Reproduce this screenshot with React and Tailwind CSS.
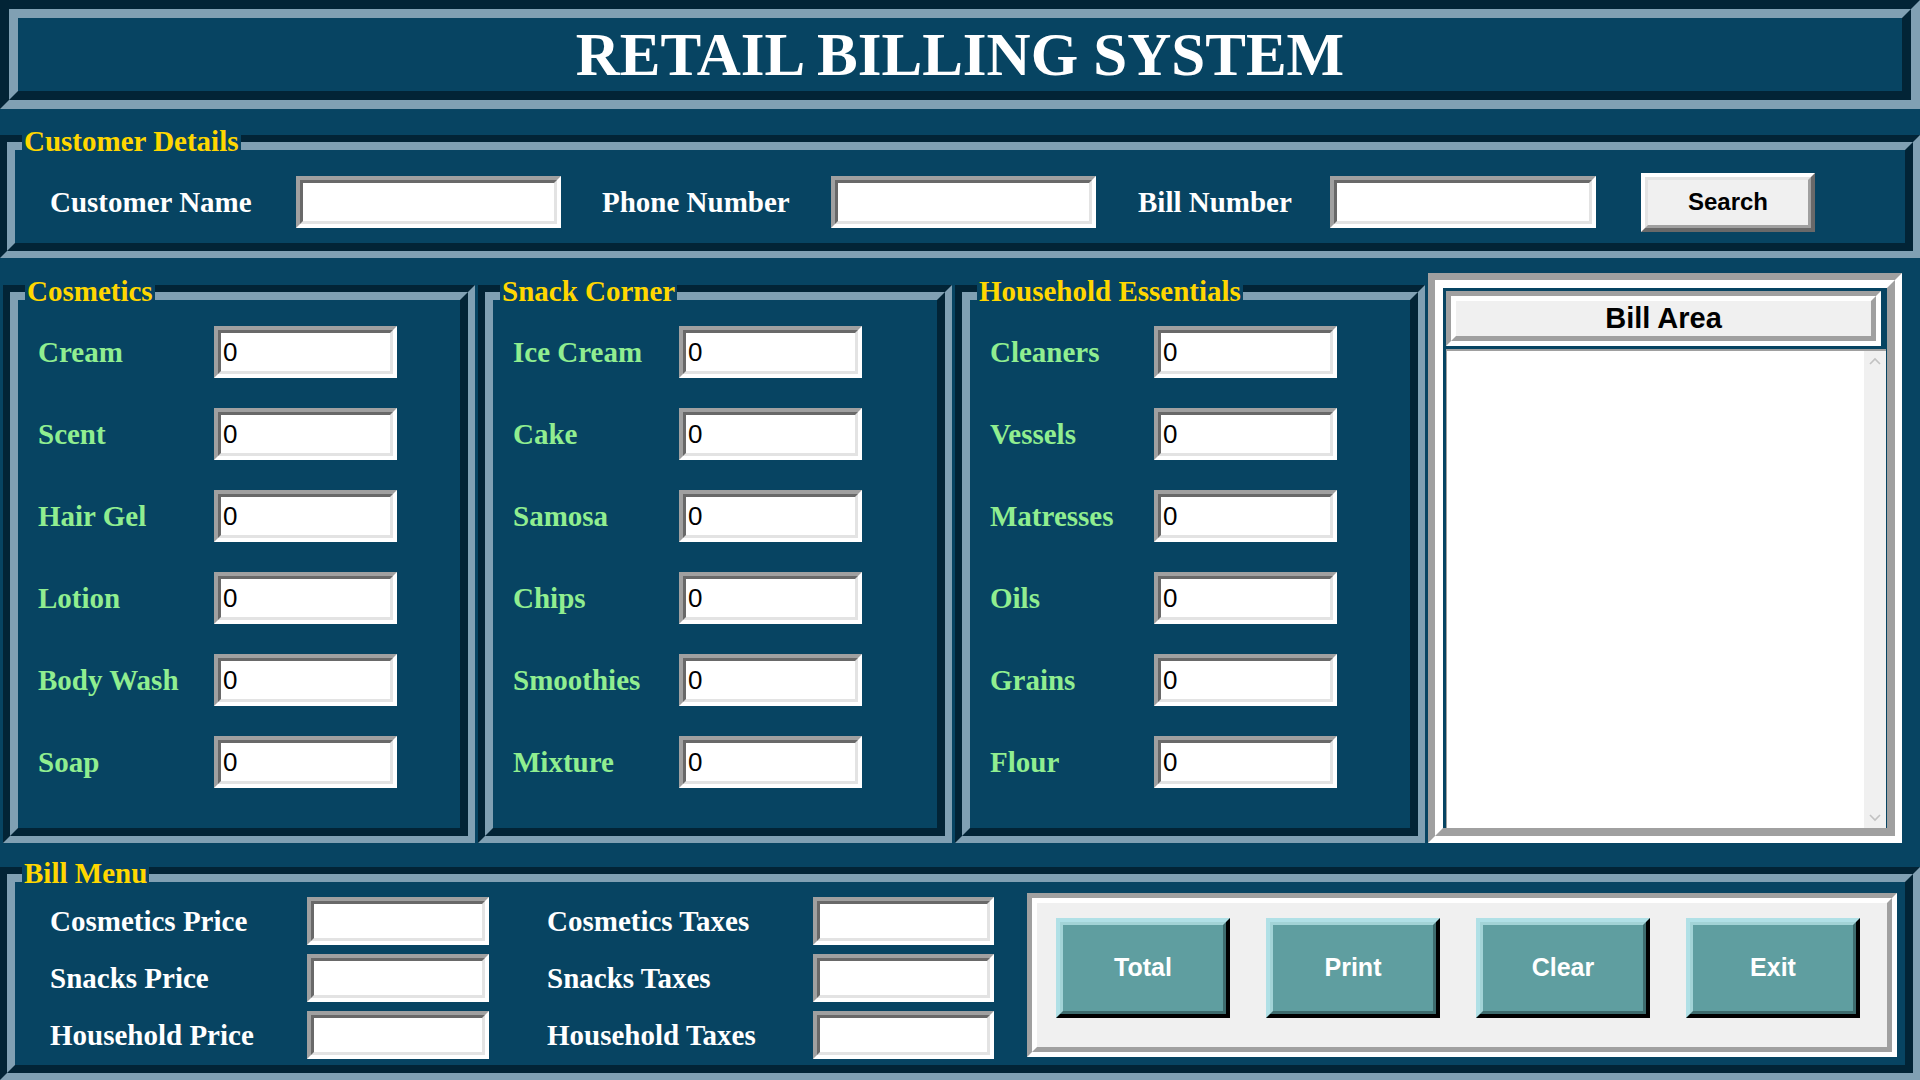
import React from 'react';

const SERIF = "font-['Liberation_Serif','Times_New_Roman',serif]";
const SANS = "font-['Liberation_Sans',Arial,sans-serif]";

function Entry({ className = '', value = '' }) {
  return (
    <div className={`border-[4px] border-t-[#a0a0a0] border-l-[#a0a0a0] border-b-white border-r-white ${className}`}>
      <div className={`h-full border-[3px] border-t-[#696969] border-l-[#696969] border-b-[#e3e3e3] border-r-[#e3e3e3] bg-white flex items-center pl-[2px] text-[26px] text-black leading-none ${SANS}`}>
        {value}
      </div>
    </div>
  );
}

function LabelFrame({ label, className = '', contentClass = '', children }) {
  return (
    <div className={`relative flex flex-col pt-[10px] ${className}`}>
      <div className="flex-1 flex flex-col border-[7px] border-t-[#022436] border-l-[#022436] border-b-[#80a0b3] border-r-[#80a0b3]">
        <div className={`flex-1 border-[8px] border-t-[#80a0b3] border-l-[#80a0b3] border-b-[#022436] border-r-[#022436] ${contentClass}`}>
          {children}
        </div>
      </div>
      <div className={`absolute left-[22px] top-[1px] bg-[#074462] px-[2px] text-[#ffd700] font-bold text-[29px] leading-[30px] whitespace-nowrap ${SERIF}`}>
        {label}
      </div>
    </div>
  );
}

function ItemFrame({ label, items, className, gridClass }) {
  return (
    <LabelFrame label={label} className={className} contentClass="pt-[26px] pl-[20px]">
      <div className={`grid gap-y-[30px] ${gridClass}`}>
        {items.map((it) => (
          <React.Fragment key={it}>
            <div className={`h-[52px] pt-[2px] flex items-center text-[#90ee90] font-bold text-[29px] whitespace-nowrap ${SERIF}`}>{it}</div>
            <Entry className="h-[52px] w-[183px]" value="0" />
          </React.Fragment>
        ))}
      </div>
    </LabelFrame>
  );
}

function TealButton({ children }) {
  return (
    <div className="w-[174px] h-[100px] border-[4px] border-t-[#b0e0e6] border-l-[#b0e0e6] border-b-black border-r-black">
      <div className={`h-full border-[3px] border-t-[#a2d3d6] border-l-[#a2d3d6] border-b-[#3e6c6e] border-r-[#3e6c6e] bg-[#5f9ea0] flex items-center justify-center text-white font-bold text-[25px] ${SANS}`}>
        {children}
      </div>
    </div>
  );
}

function WhiteLabel({ children, className = '' }) {
  return (
    <div className={`flex items-center text-white font-bold text-[29px] whitespace-nowrap ${SERIF} ${className}`}>{children}</div>
  );
}

export default function App() {
  return (
    <div className="w-[1920px] h-[1080px] bg-[#074462] overflow-hidden flex flex-col">
      {/* Title */}
      <div className="h-[109px] border-[9px] border-t-[#022436] border-l-[#022436] border-b-[#80a0b3] border-r-[#80a0b3]">
        <div className="h-full border-[9px] border-t-[#80a0b3] border-l-[#80a0b3] border-b-[#022436] border-r-[#022436] flex items-center justify-center">
          <span className={`text-white font-bold text-[61px] leading-none ${SERIF}`}>RETAIL BILLING SYSTEM</span>
        </div>
      </div>

      {/* Customer Details */}
      <LabelFrame label="Customer Details" className="mt-[16px] h-[133px]" contentClass="flex items-center pt-[11px] pl-[35px]">
        <WhiteLabel className="w-[246px] h-[52px] pt-[2px]">Customer Name</WhiteLabel>
        <Entry className="w-[265px] h-[52px]" />
        <WhiteLabel className="ml-[41px] w-[229px] h-[52px] pt-[2px]">Phone Number</WhiteLabel>
        <Entry className="w-[265px] h-[52px]" />
        <WhiteLabel className="ml-[42px] w-[192px] h-[52px] pt-[2px]">Bill Number</WhiteLabel>
        <Entry className="w-[266px] h-[52px]" />
        <div className="ml-[45px] w-[174px] h-[59px] border-[4px] border-t-white border-l-white border-b-[#696969] border-r-[#696969]">
          <div className={`h-full border-[3px] border-t-[#e3e3e3] border-l-[#e3e3e3] border-b-[#a0a0a0] border-r-[#a0a0a0] bg-[#f0f0f0] flex items-center justify-center text-black font-bold text-[24px] ${SANS}`}>
            Search
          </div>
        </div>
      </LabelFrame>

      {/* Middle row */}
      <div className="mt-[15px] h-[570px] flex gap-[3px] pl-[3px]">
        <ItemFrame
          label="Cosmetics"
          className="mt-[2px] w-[472px]"
          gridClass="grid-cols-[176px_183px]"
          items={['Cream', 'Scent', 'Hair Gel', 'Lotion', 'Body Wash', 'Soap']}
        />
        <ItemFrame
          label="Snack Corner"
          className="mt-[2px] w-[474px]"
          gridClass="grid-cols-[166px_183px]"
          items={['Ice Cream', 'Cake', 'Samosa', 'Chips', 'Smoothies', 'Mixture']}
        />
        <ItemFrame
          label="Household Essentials"
          className="mt-[2px] w-[470px]"
          gridClass="grid-cols-[164px_183px]"
          items={['Cleaners', 'Vessels', 'Matresses', 'Oils', 'Grains', 'Flour']}
        />
        {/* Bill area */}
        <div className="w-[474px] flex flex-col border-[7px] border-t-[#a0a0a0] border-l-[#a0a0a0] border-b-white border-r-white">
          <div className="flex-1 flex flex-col border-[8px] border-t-white border-l-white border-b-[#a0a0a0] border-r-[#a0a0a0]">
            <div className="ml-[3px] mr-[6px] mt-[3px] h-[55px] border-[5px] border-t-[#a0a0a0] border-l-[#a0a0a0] border-b-white border-r-white">
              <div className={`h-full border-[5px] border-t-white border-l-white border-b-[#a0a0a0] border-r-[#a0a0a0] bg-[#f0f0f0] flex items-center justify-center text-black font-bold text-[29px] ${SANS}`}>
                Bill Area
              </div>
            </div>
            <div className="ml-[3px] mr-[1px] mt-[3px] flex-1 flex border-t-[2px] border-l-[1px] border-[#a0a0a0] bg-white">
              <div className="flex-1 bg-white" />
              <div className="w-[22px] bg-[#f0f0f0] flex flex-col justify-between items-center py-[6px]">
                <svg width="12" height="8" viewBox="0 0 12 8">
                  <polyline points="1,7 6,2 11,7" fill="none" stroke="#c2c2c2" strokeWidth="1.6" />
                </svg>
                <svg width="12" height="8" viewBox="0 0 12 8">
                  <polyline points="1,1 6,6 11,1" fill="none" stroke="#c2c2c2" strokeWidth="1.6" />
                </svg>
              </div>
            </div>
          </div>
        </div>
      </div>

      {/* Bill Menu */}
      <LabelFrame label="Bill Menu" className="mt-[14px] h-[223px]" contentClass="flex items-start pl-[35px]">
        <div className="mt-[15px] grid grid-cols-[257px_182px_58px_266px_181px] gap-y-[9px]">
          <WhiteLabel className="h-[48px] pt-[2px]">Cosmetics Price</WhiteLabel>
          <Entry className="h-[48px]" />
          <div />
          <WhiteLabel className="h-[48px] pt-[2px]">Cosmetics Taxes</WhiteLabel>
          <Entry className="h-[48px]" />

          <WhiteLabel className="h-[48px] pt-[2px]">Snacks Price</WhiteLabel>
          <Entry className="h-[48px]" />
          <div />
          <WhiteLabel className="h-[48px] pt-[2px]">Snacks Taxes</WhiteLabel>
          <Entry className="h-[48px]" />

          <WhiteLabel className="h-[48px] pt-[2px]">Household Price</WhiteLabel>
          <Entry className="h-[48px]" />
          <div />
          <WhiteLabel className="h-[48px] pt-[2px]">Household Taxes</WhiteLabel>
          <Entry className="h-[48px]" />
        </div>
        <div className="ml-[33px] mt-[11px] w-[870px] h-[164px] border-[5px] border-t-[#a0a0a0] border-l-[#a0a0a0] border-b-white border-r-white">
          <div className="h-full border-[5px] border-t-white border-l-white border-b-[#a0a0a0] border-r-[#a0a0a0] bg-[#f0f0f0] flex items-start gap-[36px] pl-[19px] pt-[15px]">
            <TealButton>Total</TealButton>
            <TealButton>Print</TealButton>
            <TealButton>Clear</TealButton>
            <TealButton>Exit</TealButton>
          </div>
        </div>
      </LabelFrame>
    </div>
  );
}
